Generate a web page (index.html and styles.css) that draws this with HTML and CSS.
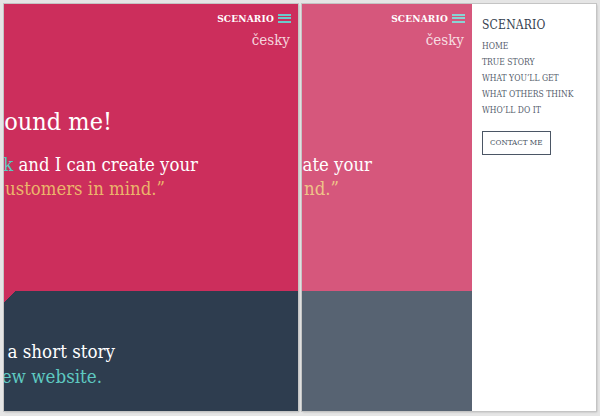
FILE: index.html
```
<!DOCTYPE html>
<html>

<head>
	<meta charset="utf-8" />
	<link rel="stylesheet" href="styles.css">
</head>

<body>

	<div class="frames">

		<!-- Closed menu -->
		<div class="device">
			<div class="page">
				<section class="hero">
					<div class="topbar">
						<span class="brand">SCENARIO</span>
						<span class="burger"><i></i><i></i><i></i></span>
					</div>
					<div class="lang">česky</div>
					<div class="line heading" style="width: 108px">ound me!</div>
					<div class="line quote" style="width: 194px"><span class="teal">k</span>&nbsp;and I can create your</div>
					<div class="line quote gold" style="width: 161px">ustomers in mind.”</div>
				</section>
				<section class="story notched">
					<div class="line tell" style="width: 111px">a short story</div>
					<div class="line tell teal" style="width: 98px">ew website.</div>
				</section>
			</div>
		</div>

		<!-- Open menu -->
		<div class="device device-open">
			<div class="viewport">
				<section class="hero">
					<div class="topbar">
						<span class="brand">SCENARIO</span>
						<span class="burger"><i></i><i></i><i></i></span>
					</div>
					<div class="lang">česky</div>
					<div class="line quote no-heading" style="width: 70px">ate your</div>
					<div class="line quote gold" style="width: 37px">nd.”</div>
				</section>
				<section class="story"></section>
			</div>
			<nav class="menu">
				<div class="menu-title">SCENARIO</div>
				<ul class="menu-list">
					<li>HOME</li>
					<li>TRUE STORY</li>
					<li>WHAT YOU’LL GET</li>
					<li>WHAT OTHERS THINK</li>
					<li>WHO’LL DO IT</li>
				</ul>
				<span class="contact">CONTACT ME</span>
			</nav>
		</div>

	</div>

</body>

</html>
```

FILE: styles.css
```
body {
	margin: 0;
	background-color: #e5e5e5;
	font-family: "DejaVu Serif", "Liberation Serif", serif;
	font-stretch: condensed;
	color: #fff;
}

.frames {
	display: flex;
	gap: 4px;
	padding: 4px;
}

.device {
	width: 294px;
	height: 407px;
	overflow: hidden;
	flex-shrink: 0;
	-webkit-box-shadow: 0 0 0 1px #c4c4c4, 1px 1px 2px rgba(0, 0, 0, .25);
	box-shadow: 0 0 0 1px #c4c4c4, 1px 1px 2px rgba(0, 0, 0, .25);
}

.device-open {
	display: flex;
	background: #fff;
}

.viewport {
	position: relative;
	width: 170px;
	overflow: hidden;
	flex-shrink: 0;
}

/* white veil over the page while the menu is open */
.viewport::after {
	content: "";
	position: absolute;
	inset: 0;
	background: rgba(255, 255, 255, .2);
}

.hero {
	height: 287px;
	background: #cc2e5c;
	overflow: hidden;
}

.topbar {
	display: flex;
	justify-content: flex-end;
	align-items: center;
	gap: 4px;
	height: 16px;
	margin-top: 6px;
	padding-right: 7px;
}

.brand {
	font-size: 10px;
	font-weight: bold;
	letter-spacing: 0.2px;
}

.burger {
	display: flex;
	flex-direction: column;
	gap: 1.5px;
	width: 13px;
}

.burger i {
	display: block;
	height: 2px;
	background: #6cc9ca;
}

.lang {
	text-align: right;
	padding-right: 8px;
	margin-top: 5px;
	font-size: 15px;
	line-height: 18px;
	color: #f5d5dd;
}

.line {
	display: flex;
	justify-content: flex-end;
	white-space: nowrap;
}

.heading {
	margin-top: 57px;
	font-size: 25px;
	line-height: 32px;
}

.quote {
	font-size: 18.4px;
	line-height: 24px;
}

.heading + .quote {
	margin-top: 15px;
}

.no-heading {
	margin-top: 104px;
}

.teal {
	color: #5ec9c1;
}

.gold {
	color: #ebb46b;
}

.story {
	height: 120px;
	padding-top: 48px;
	box-sizing: border-box;
	background: #2e3d4f;
}

.notched {
	background: linear-gradient(135deg, #cc2e5c 7.8px, #2e3d4f 7.8px);
}

.tell {
	font-size: 18.6px;
	line-height: 25px;
}

.menu {
	flex: 1;
	padding: 13px 0 0 10px;
	color: #56606d;
}

.menu-title {
	font-size: 12px;
	line-height: 16px;
	color: #34404e;
	letter-spacing: 0.2px;
}

.menu-list {
	list-style: none;
	margin: 5px 0 0;
	padding: 0;
	font-size: 8.5px;
	line-height: 16px;
}

.contact {
	display: inline-block;
	margin-top: 13px;
	padding: 0 7px;
	height: 24px;
	line-height: 21px;
	box-sizing: border-box;
	border: 1.5px solid #4b5665;
	font-size: 8px;
	color: #4b5665;
}
```
